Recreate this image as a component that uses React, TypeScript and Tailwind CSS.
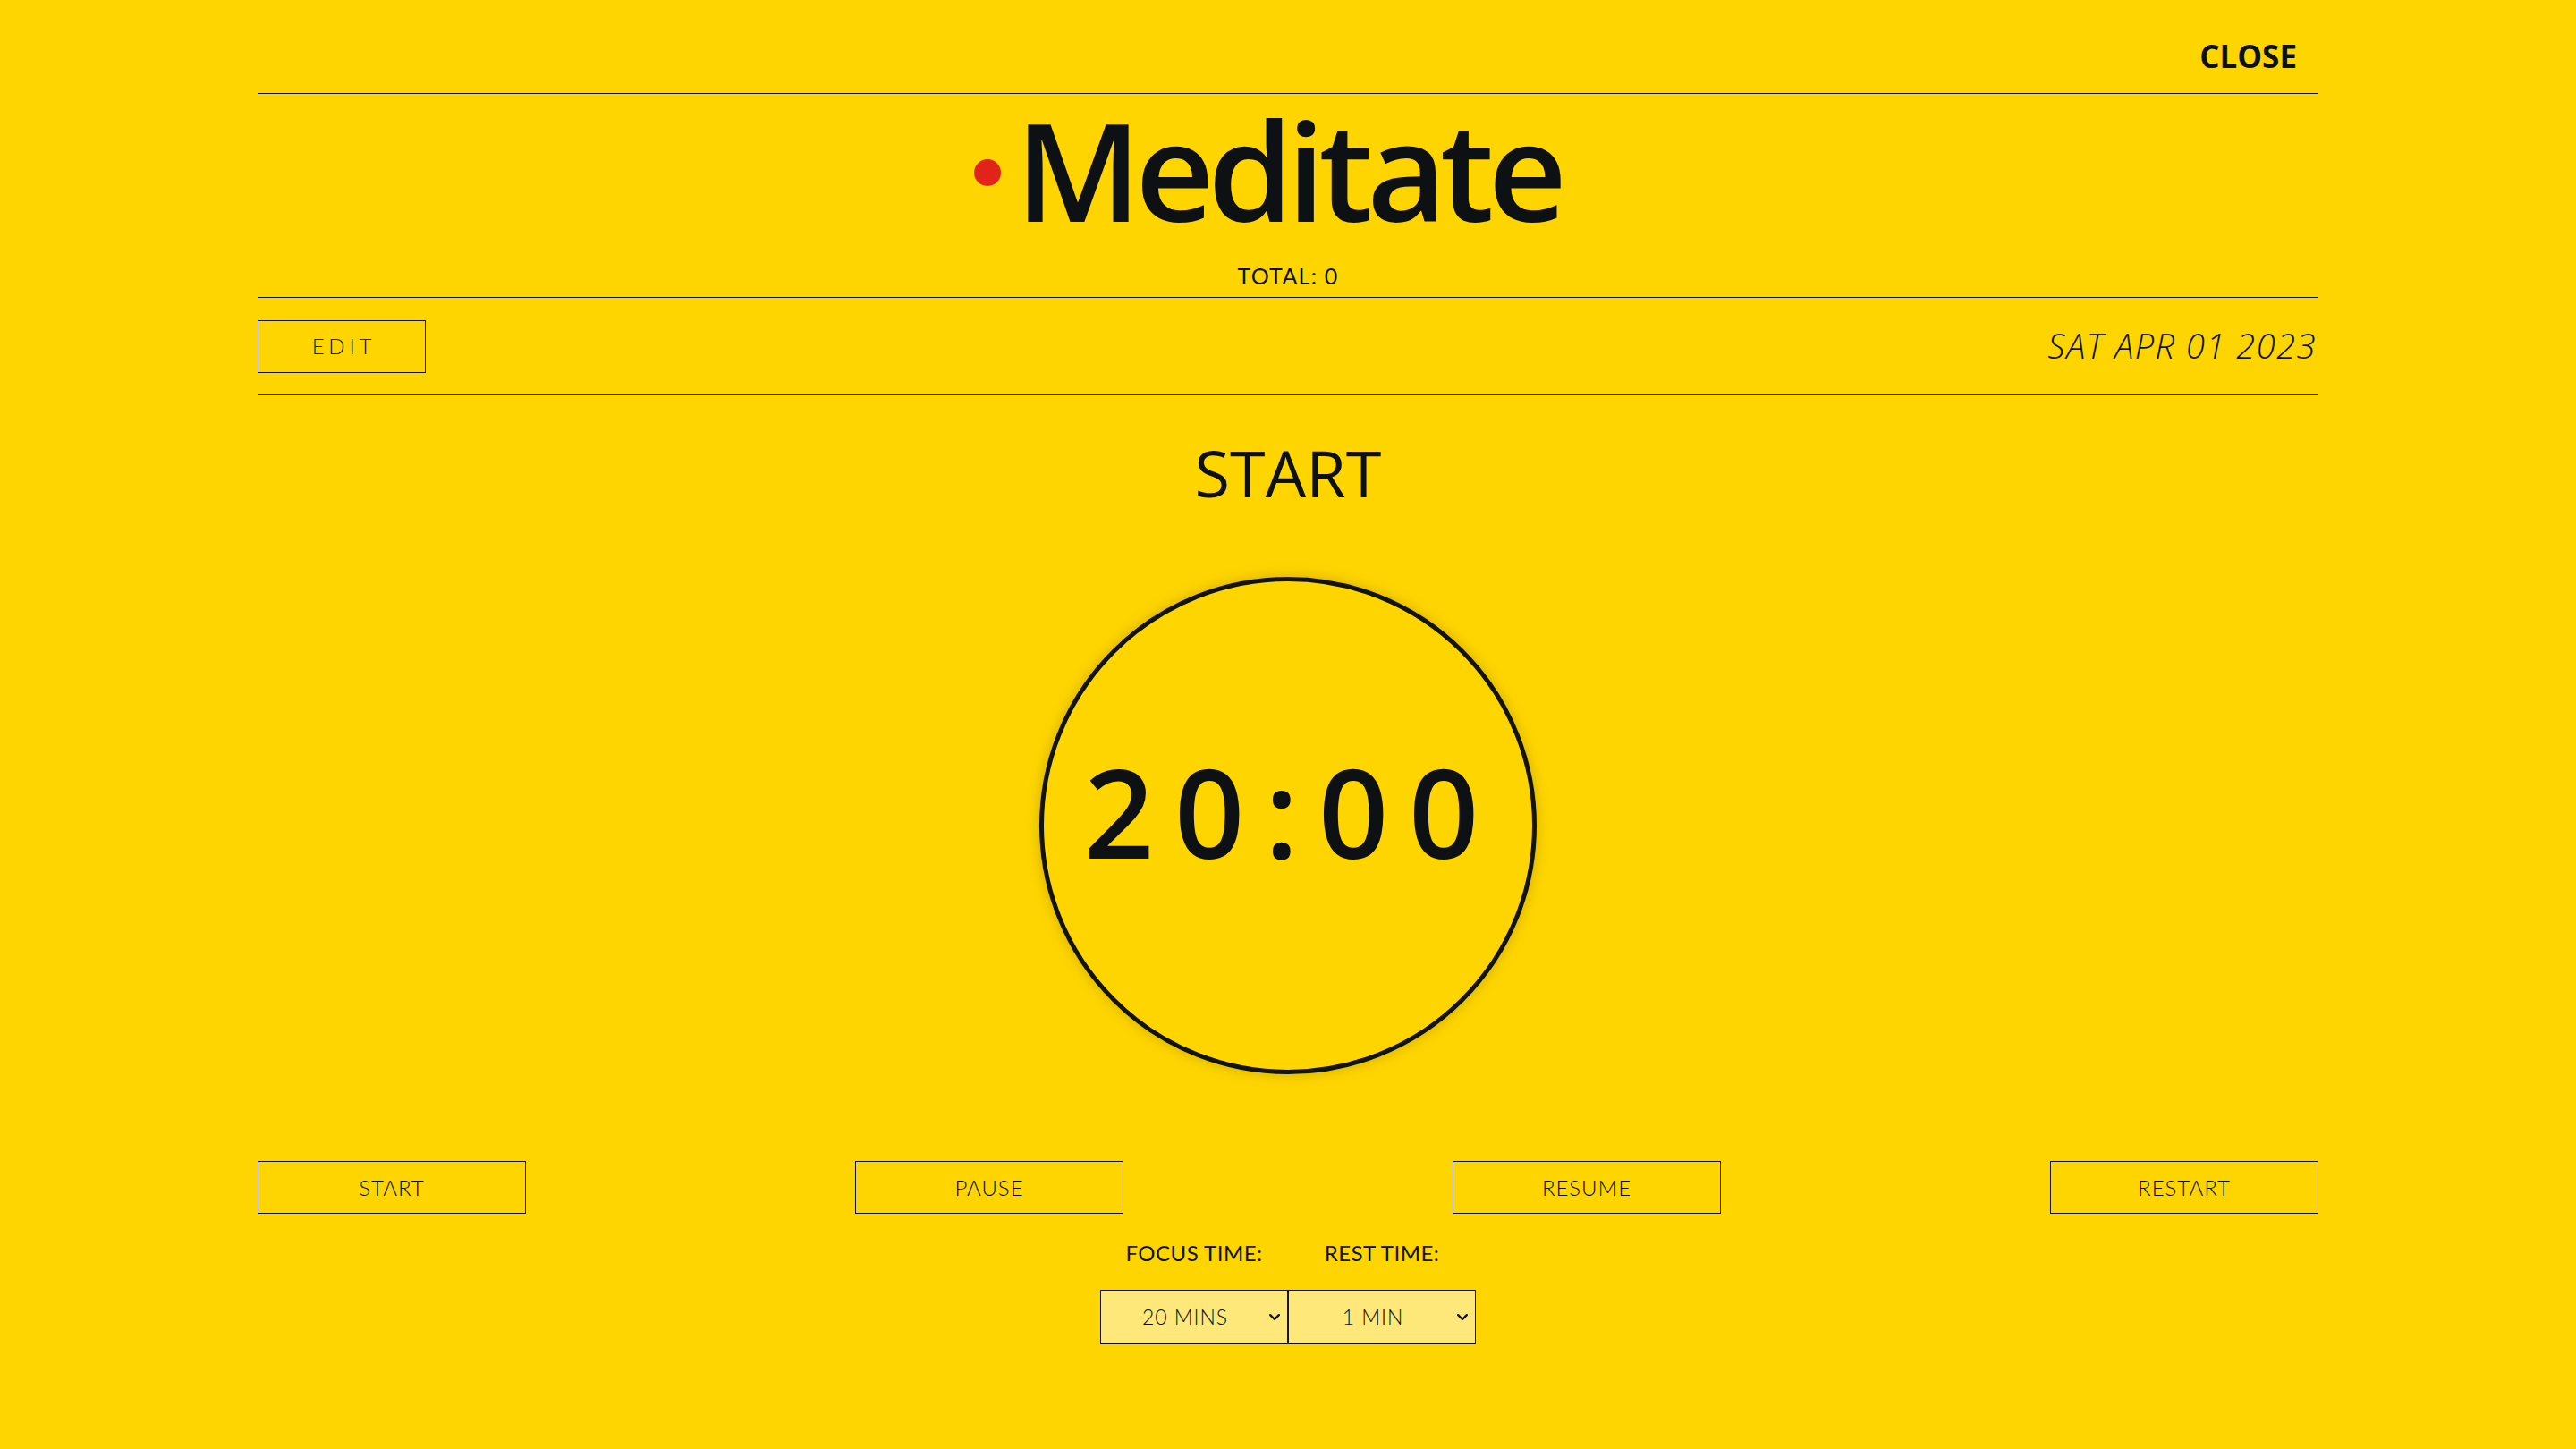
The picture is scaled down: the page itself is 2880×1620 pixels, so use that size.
import React from "react";

function Chevron() {
  return (
    <svg width="12" height="8" viewBox="0 0 12 8" className="shrink-0 mr-[8px]">
      <polyline points="1.2,1.2 6,6 10.8,1.2" fill="none" stroke="#111315" strokeWidth="2.4" strokeLinecap="round" strokeLinejoin="round" />
    </svg>
  );
}

function FakeSelect({ value }: { value: string }) {
  return (
    <div className="h-[61px] w-[210px] border border-[#111315] bg-[#FFE87A] flex items-center">
      <span className="flex-1 text-center font-['Lato',sans-serif] font-light text-[23px] leading-none tracking-[0.04em]">{value}</span>
      <Chevron />
    </div>
  );
}

export default function App() {
  const buttons = ["START", "PAUSE", "RESUME", "RESTART"];
  return (
    <div className="min-h-screen bg-[#FFD500] text-[#0E1113] font-['Open_Sans',sans-serif]">
      <div className="w-4/5 mx-auto">
        {/* Top bar */}
        <div className="h-[104px] flex items-center justify-end pt-[20px] pr-[24px]">
          <button className="text-[35px] font-bold leading-none">CLOSE</button>
        </div>

        {/* Title */}
        <div className="border-t border-[#111315] flex flex-col items-center pb-[11px]">
          <div className="mt-[7px] h-[153px] flex items-center">
            <h1 className="relative text-[153px] font-semibold leading-none tracking-[-0.045em]">
              <span className="absolute right-full mr-[16px] top-1/2 mt-[-11px] w-[30px] h-[30px] rounded-full bg-[#E2231A]" />
              Meditate
            </h1>
          </div>
          <div className="mt-[31px] text-[25px] leading-none font-['Lato',sans-serif] tracking-[0.05em]">TOTAL: 0</div>
        </div>

        {/* Edit / date row */}
        <div className="h-[110px] border-t border-b border-[#111315] flex items-center justify-between">
          <button className="w-[188px] h-[59px] border border-[#111315] font-['Lato',sans-serif] font-light text-[24px] leading-none tracking-[0.2em] pl-[0.2em]">
            EDIT
          </button>
          <div className="text-[38px] italic font-light leading-none tracking-[0.04em] pr-[2px] mt-[-2px]">SAT APR 01 2023</div>
        </div>

        {/* Timer */}
        <div className="flex flex-col items-center">
          <h2 className="mt-[50px] text-[72px] font-medium leading-none">START</h2>
          <div className="mt-[81px] w-[556px] h-[556px] rounded-full border-[5px] border-[#111315] shadow-[0_0_16px_rgba(0,0,0,0.18)] flex flex-col items-center justify-center">
            <div className="mb-[32px] ml-[8px] text-[137px] font-semibold leading-none tracking-[0.165em]">20:00</div>
          </div>
        </div>

        {/* Buttons */}
        <div className="mt-[97px] flex justify-between">
          {buttons.map((b) => (
            <button
              key={b}
              className="w-[300px] h-[59px] border border-[#111315] font-['Lato',sans-serif] font-light text-[24px] leading-none tracking-[0.04em]"
            >
              {b}
            </button>
          ))}
        </div>

        {/* Selects */}
        <div className="mt-[32px] flex justify-center">
          <div className="flex flex-col items-center w-[210px]">
            <div className="font-['Lato',sans-serif] text-[24px] leading-none tracking-[0.02em]">FOCUS TIME:</div>
            <div className="mt-[29px]">
              <FakeSelect value="20 MINS" />
            </div>
          </div>
          <div className="flex flex-col items-center w-[210px]">
            <div className="font-['Lato',sans-serif] text-[24px] leading-none tracking-[0.02em]">REST TIME:</div>
            <div className="mt-[29px]">
              <FakeSelect value="1 MIN" />
            </div>
          </div>
        </div>
      </div>
    </div>
  );
}
